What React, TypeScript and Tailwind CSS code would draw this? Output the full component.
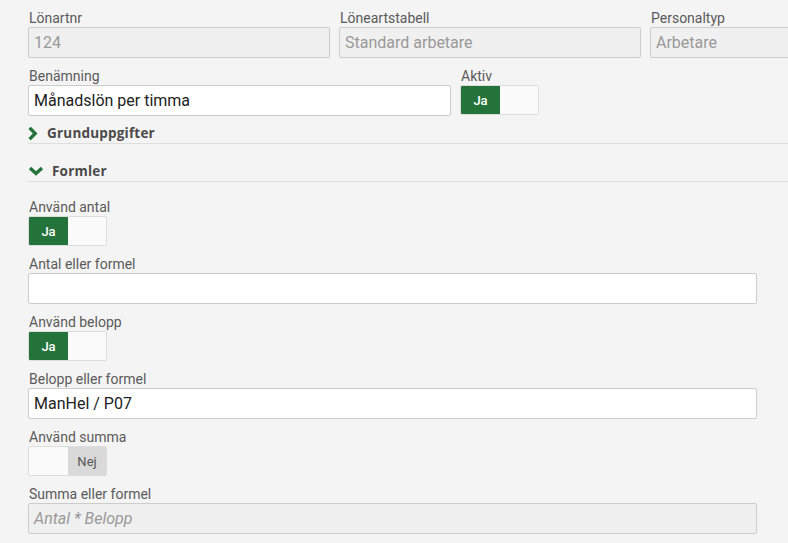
import React from "react";

const font = { fontFamily: "Roboto, 'Liberation Sans', sans-serif" };

function Label({ children }: { children: React.ReactNode }) {
  return <div className="h-[17px] text-[14px] leading-[17px] text-[#5a5a5a] pl-[1px]">{children}</div>;
}

function Input({ value, disabled, italic, w }: { value?: string; disabled?: boolean; italic?: boolean; w: string }) {
  return (
    <div
      className={`${w} h-[31px] border border-[#ccc] rounded-[2px] px-[5px] flex items-center text-[16px] ${
        disabled ? "bg-[#f0f0f0] text-[#999]" : "bg-white text-[#222]"
      } ${italic ? "italic" : ""}`}
    >
      {value}
    </div>
  );
}

function Toggle({ on }: { on: boolean }) {
  return (
    <div className="w-[79px] h-[30px] flex rounded-[2px] border border-[#ddd] overflow-hidden">
      {on ? (
        <>
          <div className="w-[39px] bg-[#23733a] text-white text-[13px] font-medium flex items-center justify-center pt-[1px]">Ja</div>
          <div className="flex-1 bg-[#fafafa]"></div>
        </>
      ) : (
        <>
          <div className="w-[39px] bg-[#fafafa]"></div>
          <div className="flex-1 bg-[#d9d9d9] text-[#555] text-[13px] flex items-center justify-center pt-[1px]">Nej</div>
        </>
      )}
    </div>
  );
}

function Header({ title, open }: { title: string; open: boolean }) {
  return (
    <div className="h-[21px] border-b border-[#dedede] flex items-start">
      <div className="flex items-center h-[20px]">
        {open ? (
          <svg width="16" height="10" viewBox="0 0 16 10" className="mr-[8px]">
            <path d="M2 2 L8 7.5 L14 2" fill="none" stroke="#23733a" strokeWidth="3.4" strokeLinecap="butt" />
          </svg>
        ) : (
          <svg width="10" height="13" viewBox="0 0 10 13" className="mr-[9px]">
            <path d="M1.6 0.8 L7.2 6.5 L1.6 12.2" fill="none" stroke="#23733a" strokeWidth="3.3" />
          </svg>
        )}
        <span
          className="text-[13.5px] font-bold text-[#4a4a4a] tracking-[0.2px] leading-[20px]"
          style={{ fontFamily: "'Open Sans', 'Liberation Sans', sans-serif" }}
        >
          {title}
        </span>
      </div>
    </div>
  );
}

export default function App() {
  return (
    <div className="w-[788px] h-[543px] bg-[#f4f4f4] overflow-hidden" style={font}>
      <div className="pl-[28px] pt-[10px] w-[1200px]">
        <div className="flex gap-[9px]">
          <div>
            <Label>Lönartnr</Label>
            <Input w="w-[302px]" value="124" disabled />
          </div>
          <div>
            <Label>Löneartstabell</Label>
            <Input w="w-[302px]" value="Standard arbetare" disabled />
          </div>
          <div>
            <Label>Personaltyp</Label>
            <Input w="w-[302px]" value="Arbetare" disabled />
          </div>
        </div>
        <div className="flex gap-[9px] mt-[10px]">
          <div>
            <Label>Benämning</Label>
            <Input w="w-[423px]" value="Månadslön per timma" />
          </div>
          <div>
            <Label>Aktiv</Label>
            <Toggle on />
          </div>
        </div>
      </div>
      <div className="pl-[28px] mt-[7px]">
        <Header title="Grunduppgifter" open={false} />
        <div className="mt-[17px]">
          <Header title="Formler" open />
        </div>
      </div>
      <div className="pl-[28px] pt-[17px] flex flex-col">
        <Label>Använd antal</Label>
        <Toggle on />
        <div className="mt-[10px]">
          <Label>Antal eller formel</Label>
          <Input w="w-[729px]" />
        </div>
        <div className="mt-[10px]">
          <Label>Använd belopp</Label>
          <Toggle on />
        </div>
        <div className="mt-[10px]">
          <Label>Belopp eller formel</Label>
          <Input w="w-[729px]" value="ManHel / P07" />
        </div>
        <div className="mt-[10px]">
          <Label>Använd summa</Label>
          <Toggle on={false} />
        </div>
        <div className="mt-[10px]">
          <Label>Summa eller formel</Label>
          <Input w="w-[729px]" value="Antal * Belopp" disabled italic />
        </div>
      </div>
    </div>
  );
}
